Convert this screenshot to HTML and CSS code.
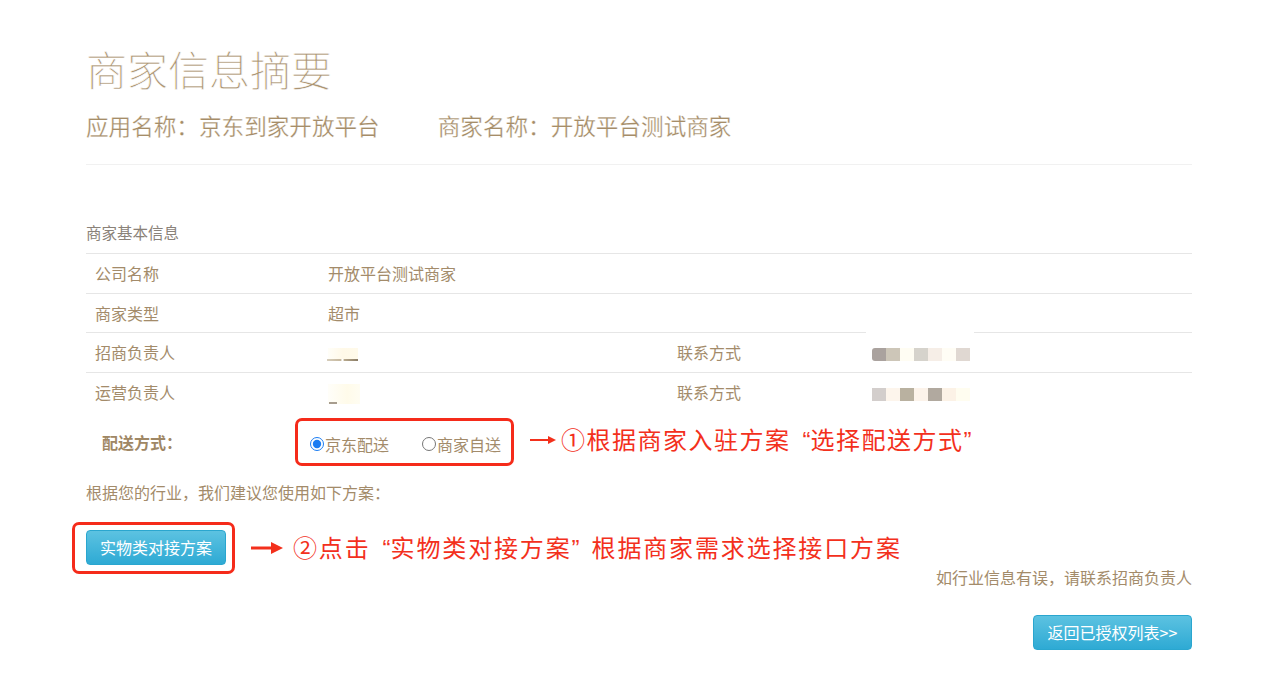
FILE: index.html
```html
<!DOCTYPE html>
<html lang="zh">
<head>
<meta charset="utf-8">
<title>商家信息摘要</title>
<link rel="stylesheet" href="styles.css">
</head>
<body>
<div class="page">
  <h1 class="title">商家信息摘要</h1>
  <div class="subtitle">
    <span>应用名称：京东到家开放平台</span>
    <span class="sub-gap">商家名称：开放平台测试商家</span>
  </div>
  <div class="hr"></div>

  <div class="section-label">商家基本信息</div>
  <table class="info">
    <colgroup>
      <col class="c1"><col class="c2"><col class="c3"><col class="c4">
    </colgroup>
    <tr><td>公司名称</td><td colspan="3">开放平台测试商家</td></tr>
    <tr><td>商家类型</td><td colspan="3">超市</td></tr>
    <tr>
      <td>招商负责人</td>
      <td><span class="blur-name one"><span class="blur-line"></span></span></td>
      <td>联系方式</td>
      <td><span class="mosaic"><span class="mosaic-cover"></span><i class="a1"></i><i class="a2"></i><i class="a3"></i><i class="a4"></i><i class="a5"></i><i class="a6"></i><i class="a7"></i></span></td>
    </tr>
    <tr>
      <td>运营负责人</td>
      <td><span class="blur-name two"><span class="blur-cover"></span><span class="blur-dot"></span></span></td>
      <td>联系方式</td>
      <td><span class="mosaic"><i class="b1"></i><i class="b2"></i><i class="b3"></i><i class="b4"></i><i class="b5"></i><i class="b6"></i><i class="b7"></i></span></td>
    </tr>
  </table>

  <div class="delivery">
    <div class="delivery-label">配送方式：</div>
    <div class="radio-box">
      <label class="radio"><input type="radio" name="ship" checked>京东配送</label>
      <label class="radio second"><input type="radio" name="ship">商家自送</label>
    </div>
    <div class="note note1">
      <svg class="arrow-thin" width="26" height="10" viewBox="0 0 26 10"><line x1="0" y1="5" x2="20" y2="5" stroke="#f3301c" stroke-width="2"/><polygon points="18,1 26,5 18,9" fill="#f3301c"/></svg>
      <span>①根据商家入驻方案<span class="q open">“</span>选择配送方式<span class="q close">”</span></span>
    </div>
  </div>

  <div class="suggest">根据您的行业，我们建议您使用如下方案：</div>

  <div class="plan-row">
    <div class="plan-wrap">
      <button class="btn">实物类对接方案</button>
      <span class="red-frame"></span>
    </div>
    <div class="note note2">
      <svg class="arrow-bold" width="32" height="14" viewBox="0 0 32 14"><line x1="0" y1="7" x2="22" y2="7" stroke="#f3301c" stroke-width="3"/><polygon points="20,1 32,7 20,13" fill="#f3301c"/></svg>
      <span>②点击<span class="q open">“</span>实物类对接方案<span class="q close">”</span>根据商家需求选择接口方案</span>
    </div>
  </div>

  <div class="hint">如行业信息有误，请联系招商负责人</div>

  <div class="back-row">
    <button class="btn back">返回已授权列表&gt;&gt;</button>
  </div>
</div>
</body>
</html>
```

FILE: styles.css
```css
* { box-sizing: border-box; }

body {
  margin: 0;
  background: #fff;
  font-family: "Noto Sans CJK SC", "Liberation Sans", sans-serif;
  color: #a38b6a;
}

.page {
  width: 1106px;
  margin-left: 86px;
  padding-top: 43px;
}

.title {
  margin: 0;
  font-family: "Noto Sans CJK SC Light", "Noto Sans CJK SC DemiLight", "Noto Sans CJK SC", sans-serif;
  font-weight: 200;
  font-size: 41px;
  line-height: 50px;
  color: #ab9472;
  -webkit-text-stroke: 0.6px #fff;
}

.subtitle {
  margin-top: 17px;
  font-size: 22.6px;
  line-height: 32px;
  color: #a68d68;
  display: flex;
  -webkit-text-stroke: 0.25px #fff;
}

.sub-gap { margin-left: 58px; }

.hr {
  margin-top: 22px;
  height: 1px;
  background: #f1f1f1;
}

.section-label {
  margin-top: 56px;
  font-size: 15.5px;
  line-height: 22px;
  color: #8a8279;
}

.info {
  margin-top: 10px;
  width: 100%;
  border-collapse: collapse;
  table-layout: fixed;
  font-size: 16px;
}

.c1 { width: 233px; }
.c2 { width: 349px; }
.c3 { width: 195px; }
.c4 { width: 329px; }

.info td {
  border-top: 1px solid #e6e6e6;
  padding: 8px 9px;
  line-height: 22.5px;
  height: 39.5px;
  vertical-align: middle;
  color: #a38b6a;
}

.blur-name {
  position: relative;
  display: inline-block;
  vertical-align: middle;
}

.blur-name.one {
  width: 30px;
  height: 13px;
  background: linear-gradient(90deg, #fffef8, #fff9e8 50%, #fffaea);
}

.blur-name.two {
  width: 32px;
  height: 20px;
  background: linear-gradient(90deg, #fffef9, #fffbea 60%, #fffdf2);
}

.blur-cover {
  position: absolute;
  left: -15px;
  width: 47px;
  top: -10px;
  height: 10px;
  background: #fff;
}

.blur-line {
  position: absolute;
  left: -1px;
  right: 0;
  bottom: 0;
  height: 2px;
  background: linear-gradient(90deg, #d6cdbb, #c5b79d 45%, #fff 48%, #fff 52%, #b9aa8e 55%, #8a7c66);
}

.blur-dot {
  position: absolute;
  left: 1px;
  bottom: 0;
  width: 8px;
  height: 2px;
  background: #a79d8e;
}

.mosaic {
  position: relative;
  display: inline-flex;
  vertical-align: middle;
}

.mosaic i {
  display: block;
  width: 14px;
  height: 13px;
}

.mosaic-cover {
  position: absolute;
  left: -6px;
  width: 108px;
  top: -16px;
  height: 6px;
  background: #fff;
}

.a1 { background: #aaa29e; border-radius: 3px 0 0 3px; }
.a2 { background: #cdc6b8; }
.a3 { background: #fffdf3; }
.a4 { background: #d6d3cc; }
.a5 { background: #f6eee7; }
.a6 { background: #fffdf5; }
.a7 { background: #e0d8d2; }
.b1 { background: #d3cecc; }
.b2 { background: #fdf5ec; }
.b3 { background: #b9b1a0; }
.b4 { background: #fcf3ea; }
.b5 { background: #b1a99f; }
.b6 { background: #fcf2e6; }
.b7 { background: #fffdf0; }

.delivery {
  margin-top: 6px;
  display: flex;
  align-items: center;
}

.delivery-label {
  width: 209px;
  padding-left: 16px;
  font-size: 16px;
  font-weight: bold;
  color: #9f8765;
}

.radio-box {
  width: 219px;
  height: 48px;
  border: 3px solid #f52b1a;
  border-radius: 7px;
  display: flex;
  align-items: center;
  padding: 4px 0 0 12px;
}

.radio {
  display: flex;
  align-items: center;
  font-size: 16px;
  line-height: 22px;
  color: #a38b6a;
}

.radio input {
  margin: 0 1px 0 0;
  width: 14px;
  height: 14px;
  accent-color: #1a7cf2;
}

.radio.second { margin-left: 33px; }

.note {
  display: flex;
  align-items: center;
  color: #f3301c;
  font-size: 24px;
  letter-spacing: 1.5px;
  line-height: 32px;
}

.q {
  font-family: "Liberation Sans", sans-serif;
  letter-spacing: 0;
}

.q.open { margin-left: 12px; }
.q.close { margin-right: 12px; }

.note1 {
  margin-left: 16px;
  margin-top: -5px;
}

.note1 svg { margin-right: 5px; }

.suggest {
  margin-top: 15px;
  font-size: 16px;
  line-height: 22px;
  color: #a38b6a;
}

.plan-row {
  margin-top: 27px;
  display: flex;
  align-items: center;
}

.plan-wrap {
  position: relative;
  display: flex;
}

.red-frame {
  position: absolute;
  left: -14px;
  right: -9px;
  top: -8px;
  bottom: -9px;
  border: 3px solid #f52b1a;
  border-radius: 7px;
}

.btn {
  height: 35px;
  padding: 0 13px;
  font-family: "Noto Sans CJK SC", "Liberation Sans", sans-serif;
  font-size: 16px;
  color: #fff;
  background: linear-gradient(#5cc2e1, #2eaad4);
  border: 1px solid #2aa6cf;
  border-radius: 4px;
  line-height: 33px;
}

.note2 {
  margin-left: 25px;
  letter-spacing: 1.85px;
}

.note2 svg { margin-right: 10px; }

.hint {
  margin-top: 1px;
  text-align: right;
  font-size: 16px;
  line-height: 22px;
  color: #a38b6a;
}

.back-row {
  margin-top: 27px;
  display: flex;
  justify-content: flex-end;
}

.btn.back {
  width: 159px;
  padding: 0;
}
```
